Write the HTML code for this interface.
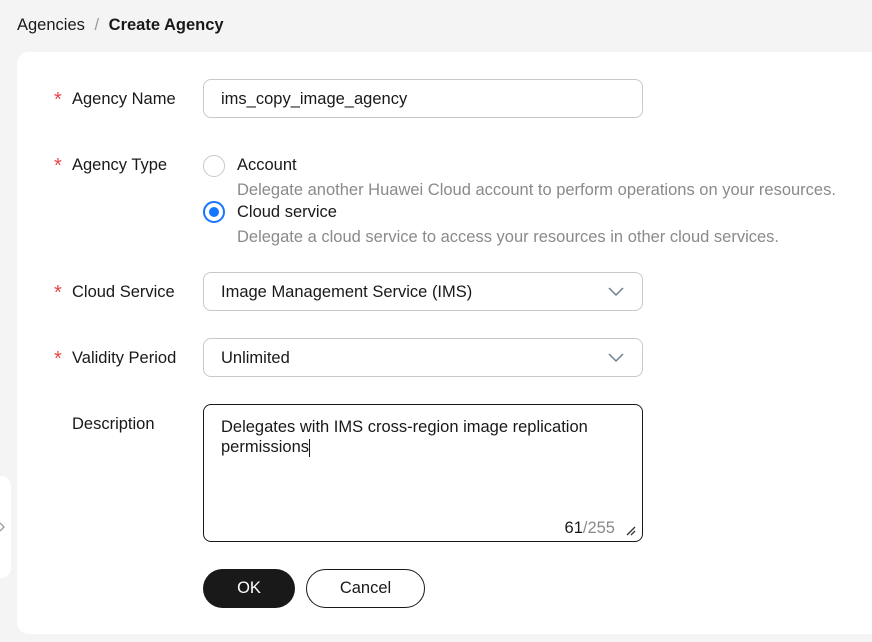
<!DOCTYPE html>
<html><head><meta charset="utf-8"><style>
*{margin:0;padding:0;box-sizing:border-box}
body{width:872px;height:642px;background:#f4f4f4;font-family:"Liberation Sans",sans-serif;position:relative;overflow:hidden;color:#191919;font-size:16.5px}
.a{position:absolute;white-space:nowrap}
.card{position:absolute;left:17px;top:52px;width:870px;height:582px;background:#fff;border-radius:12px}
.lbl{font-size:16.5px;color:#191919}
.star{position:absolute;color:#e84545;font-size:20px;left:54px}
.inp{position:absolute;left:203px;width:440px;border:1px solid #c8c8c8;border-radius:8px;height:39px;padding:0 17px;line-height:38px;font-size:16.5px}
.chev{position:absolute;right:18px;top:14px}
.desc{color:#8a8a8a;font-size:16.5px}
</style></head><body>
<div class="a" style="left:17px;top:16px;font-size:16.5px;color:#191919">Agencies <span style="color:#999;margin:0 5px">/</span> <b>Create Agency</b></div>
<div class="a" style="left:0;top:476px;width:11px;height:102px;background:#fff;border-radius:0 10px 10px 0"></div>
<svg class="a" style="left:0;top:522px" width="6" height="10"><path d="M0 1 L4 5 L0 9" stroke="#999" fill="none" stroke-width="1.3"/></svg>
<div class="card"></div>

<div class="a star" style="top:89px">*</div><div class="a lbl" style="left:72px;top:90px">Agency Name</div>
<div class="inp" style="top:79px">ims_copy_image_agency</div>

<div class="a star" style="top:155px">*</div><div class="a lbl" style="left:72px;top:156px">Agency Type</div>
<div class="a" style="left:203px;top:155px;width:22px;height:22px;border:1px solid #c8c8c8;border-radius:50%"></div>
<div class="a" style="left:237px;top:156px">Account</div>
<div class="a desc" style="left:237px;top:181px">Delegate another Huawei Cloud account to perform operations on your resources.</div>
<div class="a" style="left:203px;top:201px;width:22px;height:22px;border:2px solid #1476ff;border-radius:50%"><div style="position:absolute;left:4px;top:4px;width:10px;height:10px;background:#1476ff;border-radius:50%"></div></div>
<div class="a" style="left:237px;top:203px">Cloud service</div>
<div class="a desc" style="left:237px;top:228px">Delegate a cloud service to access your resources in other cloud services.</div>

<div class="a star" style="top:282px">*</div><div class="a lbl" style="left:72px;top:283px">Cloud Service</div>
<div class="inp" style="top:272px">Image Management Service (IMS)<svg class="chev" width="16" height="10"><path d="M1 1 L8 8 L15 1" stroke="#6e7e8f" fill="none" stroke-width="1.5"/></svg></div>

<div class="a star" style="top:348px">*</div><div class="a lbl" style="left:72px;top:349px">Validity Period</div>
<div class="inp" style="top:338px">Unlimited<svg class="chev" width="16" height="10"><path d="M1 1 L8 8 L15 1" stroke="#6e7e8f" fill="none" stroke-width="1.5"/></svg></div>

<div class="a lbl" style="left:72px;top:415px">Description</div>
<div class="a" style="left:203px;top:404px;width:440px;height:138px;border:1px solid #191919;border-radius:8px;padding:12px 17px;white-space:normal;line-height:20px">Delegates with IMS cross-region image replication permissions<span style="border-left:1px solid #191919;height:18px;display:inline-block;vertical-align:middle"></span>
<div style="position:absolute;right:27px;bottom:3px;font-size:16.5px">61<span style="color:#8a8a8a">/255</span></div>
<svg style="position:absolute;right:6px;bottom:5px" width="10" height="10"><path d="M1 9 L9 1 M5 9 L9 5" stroke="#333" stroke-width="1.3"/></svg>
</div>

<div class="a" style="left:203px;top:569px;width:92px;height:39px;background:#191919;color:#fff;border-radius:20px;text-align:center;line-height:39px">OK</div>
<div class="a" style="left:306px;top:569px;width:119px;height:39px;border:1px solid #191919;color:#191919;border-radius:20px;text-align:center;line-height:37px">Cancel</div>
</body></html>
